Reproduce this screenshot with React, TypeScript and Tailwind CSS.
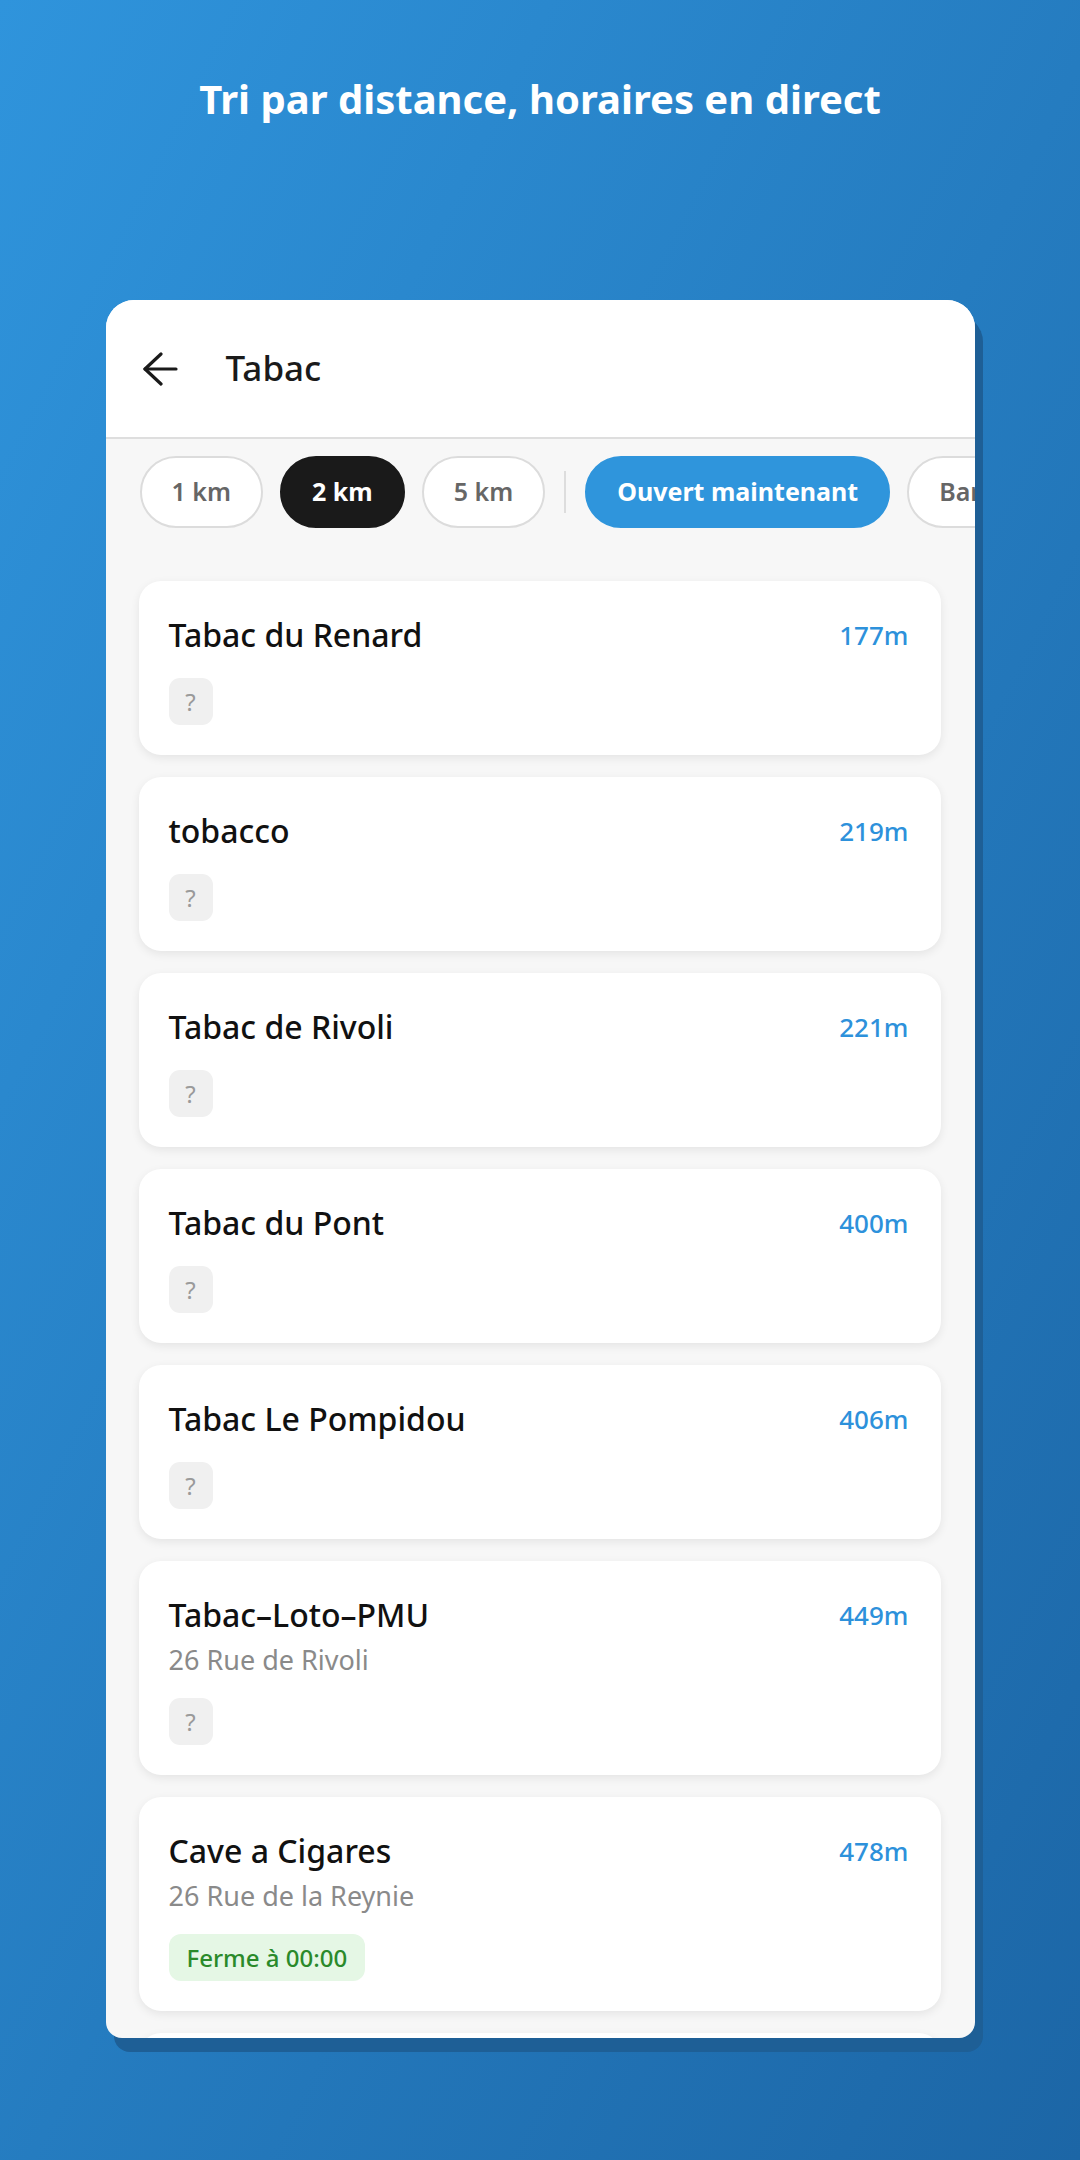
import React from "react";

type Place = {
  name: string;
  dist: string;
  address?: string;
  status?: string;
};

const places: Place[] = [
  { name: "Tabac du Renard", dist: "177m" },
  { name: "tobacco", dist: "219m" },
  { name: "Tabac de Rivoli", dist: "221m" },
  { name: "Tabac du Pont", dist: "400m" },
  { name: "Tabac Le Pompidou", dist: "406m" },
  { name: "Tabac–Loto–PMU", dist: "449m", address: "26 Rue de Rivoli" },
  { name: "Cave a Cigares", dist: "478m", address: "26 Rue de la Reynie", status: "Ferme à 00:00" },
];

function Card({ p }: { p: Place }) {
  return (
    <div className="shrink-0 rounded-[22px] bg-white pl-[30px] pr-[32px] pt-[32px] pb-[30px] shadow-[0_3px_10px_rgba(0,0,0,0.08)]">
      <div className="flex items-start justify-between">
        <div className="text-[32px] leading-[44px] font-medium text-[#111]">{p.name}</div>
        <div className="text-[26px] leading-[44px] font-medium text-[#2d91db]">{p.dist}</div>
      </div>
      {p.address && (
        <div className="mt-[6px] text-[27px] leading-[34px] text-[#8a8a8a]">{p.address}</div>
      )}
      <div className="mt-[21px] flex">
        {p.status ? (
          <div className="flex h-[47px] items-center rounded-[12px] bg-[#e5f7e5] px-[18px] text-[24px] font-medium text-[#2a8a2a]">
            {p.status}
          </div>
        ) : (
          <div className="flex h-[47px] w-[44px] items-center justify-center rounded-[11px] bg-[#f0f0f0] text-[24px] text-[#9a9a9a]">
            ?
          </div>
        )}
      </div>
    </div>
  );
}

function Chip({ label, variant }: { label: string; variant: "plain" | "dark" | "blue" }) {
  const cls =
    variant === "dark"
      ? "bg-[#1a1a1a] text-white font-bold border-[#1a1a1a]"
      : variant === "blue"
      ? "bg-[#2f95dc] text-white font-bold border-[#2f95dc]"
      : "bg-white text-[#666] font-semibold border-[#dcdcdc]";
  return (
    <div
      className={`flex h-[72px] shrink-0 items-center whitespace-nowrap rounded-full border-[2px] px-[30px] text-[25px] ${cls}`}
    >
      {label}
    </div>
  );
}

export default function App() {
  return (
    <div className="flex min-h-[2160px] w-[1080px] flex-col items-center bg-linear-to-br from-[#2f94dc] to-[#1c66a6] font-['Noto_Sans',sans-serif]">
      <div className="mt-[72px] h-[54px] text-[40px] leading-[54px] font-bold text-white">
        Tri par distance, horaires en direct
      </div>

      <div className="mt-[174px] flex h-[1738px] w-[869px] flex-col overflow-hidden rounded-t-[28px] rounded-b-[16px] bg-[#f7f7f7] shadow-[8px_14px_0_#1e5f96]">
        <div className="flex h-[139px] shrink-0 items-center border-b-[2px] border-[#dedede] bg-white pl-[36px]">
          <svg width="36" height="34" viewBox="0 0 36 34" fill="none" stroke="#1a1a1a" strokeWidth="3.2" strokeLinecap="round" strokeLinejoin="round">
            <path d="M34 17H3" />
            <path d="M19 2L3 17L19 32" />
          </svg>
          <div className="ml-[48px] text-[35px] font-medium text-[#1a1a1a]">Tabac</div>
        </div>

        <div className="flex shrink-0 items-center gap-[17px] overflow-hidden pl-[34px] pt-[17px] pb-[53px]">
          <Chip label="1 km" variant="plain" />
          <Chip label="2 km" variant="dark" />
          <Chip label="5 km" variant="plain" />
          <div className="mx-[2px] h-[42px] w-[2px] shrink-0 bg-[#dddddd]" />
          <Chip label="Ouvert maintenant" variant="blue" />
          <Chip label="Bar-tabac" variant="plain" />
        </div>

        <div className="flex flex-col gap-[22px] pl-[33px] pr-[34px]">
          {places.map((p) => (
            <Card key={p.name} p={p} />
          ))}
          <div className="h-[174px] shrink-0 rounded-[22px] bg-white shadow-[0_3px_10px_rgba(0,0,0,0.08)]" />
        </div>
      </div>
    </div>
  );
}
